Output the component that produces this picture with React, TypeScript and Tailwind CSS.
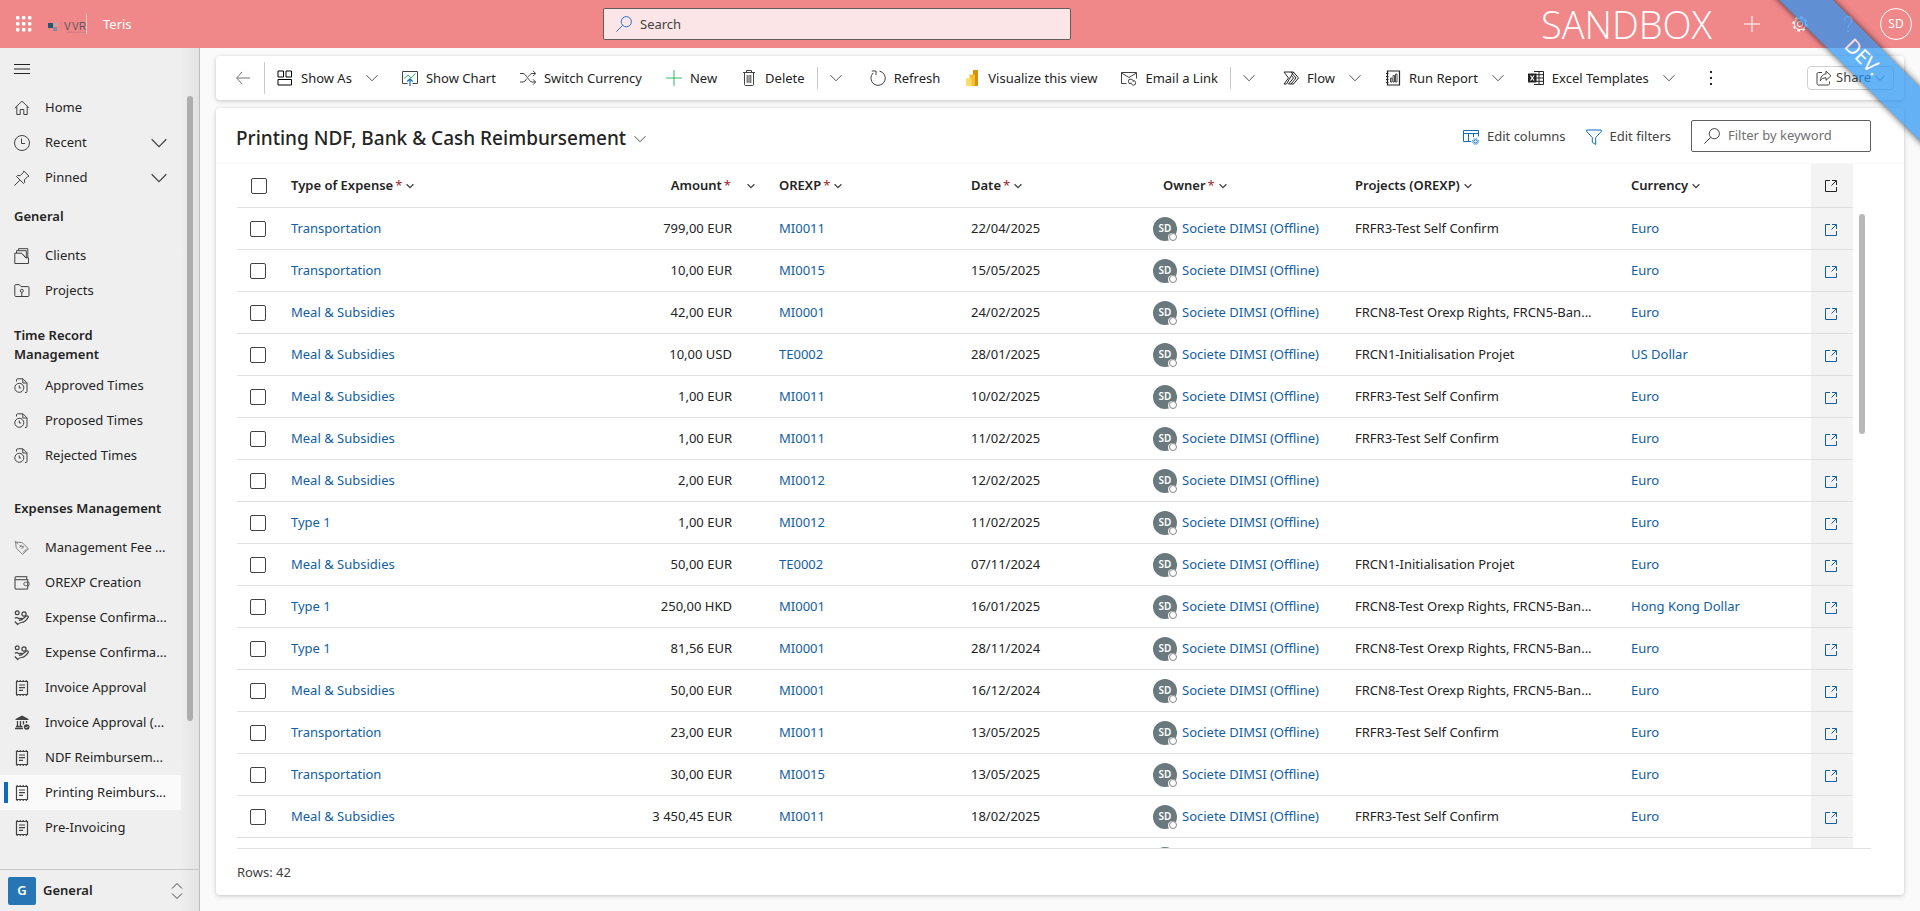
import type { ReactNode, SVGProps } from 'react';
import { clsx } from 'clsx';

type IconProps = SVGProps<SVGSVGElement>;

const Icon = ({ children, className = 'size-4', ...rest }: IconProps) => (
  <svg viewBox="0 0 16 16" fill="none" stroke="currentColor" strokeWidth="1" className={clsx('shrink-0', className)} aria-hidden="true" {...rest}>
    {children}
  </svg>
);

const ChevronDown = ({ className = 'size-3 text-[#424242]' }: { className?: string }) => (
  <svg viewBox="0 0 12 12" fill="none" stroke="currentColor" strokeWidth=".9" className={clsx('shrink-0', className)} aria-hidden="true">
    <path d="M.5 3.2 6 8.8l5.5-5.6" />
  </svg>
);

const SortChevron = () => (
  <svg viewBox="0 0 8 8" fill="none" stroke="currentColor" strokeWidth="1.3" className="size-2 shrink-0 text-[#424242]" aria-hidden="true">
    <path d="M.6 2.2 4 5.6l3.4-3.4" />
  </svg>
);

const SearchIcon = ({ className }: { className?: string }) => (
  <Icon className={className}>
    <circle cx="10.3" cy="5.7" r="5.1" />
    <path d="M6.7 9.3.4 15.6" />
  </Icon>
);

const HomeIcon = () => (
  <Icon>
    <path d="M.8 8 8 1.2 15.2 8M2.8 6.2v8.3h3.4V9.5h3.6v5h3.4V6.2" />
  </Icon>
);

const ClockIcon = () => (
  <Icon>
    <circle cx="8" cy="8" r="7.5" />
    <path d="M7.5 3.5v5h3.5" />
  </Icon>
);

const PinIcon = () => (
  <Icon>
    <path d="M.5 15.5 5.700 10.300M9.800 1 15 6.200l-1.400.5-3.200 3.200.2 2.600-1 1L2.500 6.500l1-1 2.700.2L9.300 2.500z" />
  </Icon>
);

const ClientsIcon = () => (
  <Icon>
    <path d="M.8 5.200v10.300h13.700V9.800H12L7.300 5.200zM2.500 5V2.700h9.800v7M4.500 2.500V.7h9.300v9M7.300 5.200l5 4.800" />
  </Icon>
);

const ProjectsIcon = () => (
  <Icon>
    <path d="M.8 12.500V2.600c0-.6.4-1 1-1h3.500l1.700 2h7c.6 0 1 .4 1 1v7.900c0 .6-.4 1-1 1H1.800c-.6 0-1-.4-1-1z" />
    <circle cx="7.800" cy="7.800" r="1.500" />
    <path d="M7.800 9.300v4" />
  </Icon>
);

const TimesIcon = () => (
  <Icon>
    <circle cx="5.300" cy="9.800" r="4.500" />
    <path d="M5.300 7.500v2.500h1.800M2.500 3.500V1.800c0-.6.4-1 1-1h5.500l4 4v8.700c0 .6-.4 1-1 1h-1M8.800 1v4h4" />
  </Icon>
);

const TagIcon = () => (
  <Icon className="size-4 text-[#808080]">
    <path d="m1.500 2 .8 6.200 6.300 6.200 5.900-5.600-6.300-6.200L1.500 2zM.5.8l3.500 3.500" />
    <path d="m5.500 7.500 2-2.300M7.500 9l2-2.500M5.500 5.500l4.500 1.500M9 12.500l4-4" />
  </Icon>
);

const WalletIcon = () => (
  <Icon className="size-4 text-[#616161]">
    <path d="M1 3.200v9.600c0 .8.600 1.400 1.400 1.400h10.400c.5 0 .9-.4.900-.9V4.700H2.300C1.500 4.700 1 4 1 3.200s.6-1.600 1.400-1.600h10.300v3" strokeWidth="1.300" />
    <path d="M15 7.200h-3.500a1.700 1.700 0 0 0 0 3.500H15z" />
  </Icon>
);

const HandIcon = () => (
  <Icon strokeWidth="1.200">
    <circle cx="3.200" cy="2.800" r="1.900" />
    <circle cx="10" cy="4" r="2.100" />
    <path d="M.8 8.200c1.500-1 3-.6 4 .5l2.500-.3c1 0 1 1.500 0 1.600l-2.300.4M8 9.500l4-3.300c1-.8 2.800 0 2.200 1.200-1.500 2.400-3.500 4.800-6.500 5.100-1.500.1-3 .3-4 2L.8 11.500" />
  </Icon>
);

const ReceiptIcon = () => (
  <Icon>
    <path d="M2.500 1.500h11v13h-11z" strokeWidth="1.200" />
    <path d="M2.500.7h11M2.500 15.300h11" strokeDasharray="1.500 1.500" />
    <path d="M5 5h6M5 7.700h6M5 10.300h4" strokeWidth="1.200" />
  </Icon>
);

const BankIcon = () => (
  <Icon>
    <path d="M8 .5 14.500 4v1h-13V4z" fill="currentColor" stroke="none" />
    <path d="M3.500 6v5M6.500 6v5M9.500 6v3.500M12.500 6v2M1 13.500h8M2 11.500h6.500" strokeWidth="1.300" />
    <circle cx="12.700" cy="12" r="2.800" fill="currentColor" stroke="none" />
    <path d="m11.400 12 1 1 1.700-1.700" stroke="#efefef" />
  </Icon>
);

const ShowAsIcon = () => (
  <Icon className="size-4 text-black">
    <path d="M1 1h5.500v6H1zM9 1h5.500v6H9zM1 9.500h13.500V15H1z" />
  </Icon>
);

const ChartIcon = () => (
  <Icon>
    <path d="M5.500 13.500h-5v-12h15v12h-5" />
    <path d="M2 8.500 6 5l3 3 4.500-4.500" stroke="#2fb866" />
    <path d="M8 16V9M5.300 11.500 8 8.800l2.700 2.700" stroke="#0f6cbd" strokeWidth="1.200" />
  </Icon>
);

const SwitchIcon = () => (
  <Icon>
    <path d="M0 3.500h3c3 0 6 8.500 9 8.500h3.500M0 12h3c1.300 0 2.500-1.500 3.700-3.300M8.300 6.700C9.500 5 10.700 3.500 12 3.500h3.500M13 .8l2.700 2.700L13 6.200M13 9.300l2.700 2.700-2.700 2.700" />
  </Icon>
);

const PlusIcon = ({ className }: { className?: string }) => (
  <Icon className={className}>
    <path d="M8 0v16M0 8h16" />
  </Icon>
);

const TrashIcon = () => (
  <Icon>
    <path d="M2 2.500h12M5.500 2.500v-2h5v2M3.500 2.500v12c0 .6.400 1 1 1h7c.6 0 1-.4 1-1v-12M6.200 5v8M8 5v8M9.800 5v8" />
  </Icon>
);

const RefreshIcon = () => (
  <Icon>
    <path d="M9.500 1.100a7.200 7.200 0 1 1-6.300 1.800M1.800 1H6v4" />
  </Icon>
);

const PowerBiIcon = () => (
  <Icon stroke="none">
    <path d="M9 0h4.500c.3 0 .5.200.5.500v15c0 .3-.2.500-.5.500H9z" fill="#d9910a" />
    <path d="M5.500 4.500h4.800c.4 0 .7.300.7.700V16H5.500z" fill="#f0c02f" />
    <path d="M2.500 8.300h4.300c.4 0 .7.300.7.700v7h-5c-.3 0-.5-.2-.5-.5V8.800c0-.3.200-.5.500-.5z" fill="#f8dc6a" />
  </Icon>
);

const MailLinkIcon = () => (
  <Icon>
    <path d="M5.500 13.500h-5v-11h15v6M.5 3 8 7.500 15.500 3" />
    <path d="M10 13.500a2.200 2.200 0 1 1 0-4.300c1.500 0 2.300 1.200 2 2.500M12 10.700a2.200 2.200 0 1 1 .8 4.500c-1.500 0-2.700-1-2.500-2.500" />
  </Icon>
);

const FlowIcon = () => (
  <Icon className="size-4 text-[#242424]">
    <path d="M1 2h9.500l5 6-5 6H8l5-6-5-6M1 2l4.500 6L1 14h2.500l7-12M5.500 14 10.500 8 8.500 5.500M5.500 14H8" />
  </Icon>
);

const ReportIcon = () => (
  <Icon className="size-4 text-[#242424]">
    <path d="M2.500 1h12v14h-12zM1 3.500h2.500M1 6.500h2.500M1 9.500h2.500M1 12.500h2.500" strokeWidth="1.200" />
    <path d="M5.500 8h1.500v4H5.500zM8 5.500h1.500v6.500H8zM10.500 4H12v8h-1.500z" strokeWidth=".8" />
  </Icon>
);

const ExcelIcon = () => (
  <Icon className="size-4 text-[#242424]">
    <path d="M6 1.500h9.500v13H6M6 4.700h9.500M6 8h9.500M6 11.300h9.500M11 1.500v13" />
    <path d="M0 3.500h8.500v9H0z" fill="currentColor" stroke="none" />
    <path d="m2.500 5.500 3.500 5M6 5.500l-3.500 5" stroke="#fff" strokeWidth="1.200" />
  </Icon>
);

const ShareIcon = () => (
  <Icon>
    <path d="M6 2.500H2.500c-1 0-1.500.5-1.500 1.500v9.500c0 1 .5 1.500 1.500 1.500H12c1 0 1.500-.5 1.500-1.500v-2M10 1.200 15 5.800l-5 4.500V7.800c-2.800 0-4.500.9-5.700 3C4.500 7 6.500 4.200 10 3.900z" />
  </Icon>
);

const GearIcon = () => (
  <Icon>
    <circle cx="8" cy="8" r="2.600" />
    <circle cx="8" cy="8" r="5.600" />
    <circle cx="8" cy="8" r="6.900" strokeWidth="1.600" strokeDasharray="2.700 2.720" />
  </Icon>
);

const HelpIcon = () => (
  <Icon>
    <path d="M4.500 4.500C4.500 2 6 .6 8.200.6s3.800 1.400 3.800 3.600c0 3-4 3.800-4 7.300M8 14v1.800" />
  </Icon>
);

const EditColumnsIcon = () => (
  <Icon className="size-4 text-[#0f6cbd]">
    <path d="M8 12.500H.5v-11h15v6M.5 4.500h15M5.500 4.500v8M10.500 4.500V8" />
    <circle cx="12.500" cy="12.500" r="1.700" />
    <circle cx="12.500" cy="12.500" r="2.900" strokeDasharray="1.100 1.177" />
  </Icon>
);

const FunnelIcon = () => (
  <Icon className="size-4 text-[#0f6cbd]">
    <path d="M.7 1h14.600v1.500L9.700 8.500v7l-3.400-2.200V8.500L.7 2.500z" />
  </Icon>
);

const OpenIcon = () => (
  <svg viewBox="0 0 12 12" fill="none" stroke="currentColor" className="size-3 shrink-0" aria-hidden="true">
    <path d="M5 .5H.5v11h11V7M7 .5h4.500V5M11 1 6.500 5.500" />
  </svg>
);

interface NavItem {
  label: string;
  icon: ReactNode;
  active?: boolean;
}

const times: NavItem[] = [
  { label: 'Approved Times', icon: <TimesIcon /> },
  { label: 'Proposed Times', icon: <TimesIcon /> },
  { label: 'Rejected Times', icon: <TimesIcon /> },
];

const expenses: NavItem[] = [
  { label: 'Management Fee ...', icon: <TagIcon /> },
  { label: 'OREXP Creation', icon: <WalletIcon /> },
  { label: 'Expense Confirma...', icon: <HandIcon /> },
  { label: 'Expense Confirma...', icon: <HandIcon /> },
  { label: 'Invoice Approval', icon: <ReceiptIcon /> },
  { label: 'Invoice Approval (...', icon: <BankIcon /> },
  { label: 'NDF Reimbursem...', icon: <ReceiptIcon /> },
  { label: 'Printing Reimburs...', icon: <ReceiptIcon />, active: true },
  { label: 'Pre-Invoicing', icon: <ReceiptIcon /> },
];

const NavLink = ({ label, icon, active }: NavItem) => (
  <li className={clsx('flex h-[35px] items-center pl-1', active && 'bg-[#fafafa]')}>
    <span className={clsx('h-[21px] w-1 shrink-0', active && 'bg-[#0f6cbd]')} />
    <a href="#" className="flex min-w-0 grow items-center gap-[15px] pl-1.5 whitespace-nowrap">
      <span className="text-[#424242]">{icon}</span>
      {label}
    </a>
  </li>
);

const NavToggle = ({ label, icon }: NavItem) => (
  <li>
    <button className="flex h-[35px] w-full items-center gap-[15px] pr-[14px] pl-3.5 text-left">
      <span className="text-[#424242]">{icon}</span>
      <span className="grow">{label}</span>
      <ChevronDown className="size-4 text-[#424242]" />
    </button>
  </li>
);

const NavHeading = ({ children }: { children: ReactNode }) => (
  <h2 className="px-3.5 leading-[19px] font-semibold">{children}</h2>
);

interface Expense {
  type: string;
  amount: string;
  orexp: string;
  date: string;
  projects?: string;
  currency: string;
}

const orexpRights = 'FRCN8-Test Orexp Rights, FRCN5-Ban...';

const rows: Expense[] = [
  { type: 'Transportation', amount: '799,00 EUR', orexp: 'MI0011', date: '22/04/2025', projects: 'FRFR3-Test Self Confirm', currency: 'Euro' },
  { type: 'Transportation', amount: '10,00 EUR', orexp: 'MI0015', date: '15/05/2025', currency: 'Euro' },
  { type: 'Meal & Subsidies', amount: '42,00 EUR', orexp: 'MI0001', date: '24/02/2025', projects: orexpRights, currency: 'Euro' },
  { type: 'Meal & Subsidies', amount: '10,00 USD', orexp: 'TE0002', date: '28/01/2025', projects: 'FRCN1-Initialisation Projet', currency: 'US Dollar' },
  { type: 'Meal & Subsidies', amount: '1,00 EUR', orexp: 'MI0011', date: '10/02/2025', projects: 'FRFR3-Test Self Confirm', currency: 'Euro' },
  { type: 'Meal & Subsidies', amount: '1,00 EUR', orexp: 'MI0011', date: '11/02/2025', projects: 'FRFR3-Test Self Confirm', currency: 'Euro' },
  { type: 'Meal & Subsidies', amount: '2,00 EUR', orexp: 'MI0012', date: '12/02/2025', currency: 'Euro' },
  { type: 'Type 1', amount: '1,00 EUR', orexp: 'MI0012', date: '11/02/2025', currency: 'Euro' },
  { type: 'Meal & Subsidies', amount: '50,00 EUR', orexp: 'TE0002', date: '07/11/2024', projects: 'FRCN1-Initialisation Projet', currency: 'Euro' },
  { type: 'Type 1', amount: '250,00 HKD', orexp: 'MI0001', date: '16/01/2025', projects: orexpRights, currency: 'Hong Kong Dollar' },
  { type: 'Type 1', amount: '81,56 EUR', orexp: 'MI0001', date: '28/11/2024', projects: orexpRights, currency: 'Euro' },
  { type: 'Meal & Subsidies', amount: '50,00 EUR', orexp: 'MI0001', date: '16/12/2024', projects: orexpRights, currency: 'Euro' },
  { type: 'Transportation', amount: '23,00 EUR', orexp: 'MI0011', date: '13/05/2025', projects: 'FRFR3-Test Self Confirm', currency: 'Euro' },
  { type: 'Transportation', amount: '30,00 EUR', orexp: 'MI0015', date: '13/05/2025', currency: 'Euro' },
  { type: 'Meal & Subsidies', amount: '3 450,45 EUR', orexp: 'MI0011', date: '18/02/2025', projects: 'FRFR3-Test Self Confirm', currency: 'Euro' },
];

const Command = ({ icon, label, menu }: { icon: ReactNode; label: string; menu?: boolean }) => (
  <button className="flex h-9 shrink-0 items-center gap-2 px-3 whitespace-nowrap">
    <span className="text-[#424242]">{icon}</span>
    <span className="pt-0.5">{label}</span>
    {menu && <ChevronDown className="ml-1.5 size-3 text-[#424242]" />}
  </button>
);

const SplitMenu = ({ label }: { label: string }) => (
  <button aria-label={label} className="flex h-[22px] shrink-0 items-center border-l border-[#c8c8c8] pr-4 pl-3">
    <ChevronDown />
  </button>
);

const ColumnTitle = ({ label, required }: { label: string; required?: boolean }) => (
  <button className="flex items-center gap-1 font-semibold">
    <span>
      {label}
      {required && <span className="ml-0.5 font-normal text-[#a4262c]">*</span>}
    </span>
    <SortChevron />
  </button>
);

const Checkbox = ({ label }: { label: string }) => (
  <input
    type="checkbox"
    aria-label={label}
    className="block size-4 appearance-none rounded-xs border border-[#424242] bg-white"
  />
);

const Owner = () => (
  <a href="#" className="flex items-center gap-[5px]">
    <span className="relative flex size-6 shrink-0 items-center justify-center rounded-full bg-[#69797e] text-[10px] font-semibold text-white">
      SD
      <span className="absolute right-0 -bottom-px flex size-[9px] items-center justify-center rounded-full bg-white">
        <span className="size-2 rounded-full border border-[#8a8886]" />
      </span>
    </span>
    <span className="whitespace-nowrap">Societe DIMSI (Offline)</span>
  </a>
);

const cell = 'border-b border-[#e0e0e0] px-3';

const TopBar = () => (
  <header className="flex h-12 shrink-0 items-center bg-[#f08789] text-white">
    <div className="flex w-[603px] items-center">
      <button aria-label="App launcher" className="ml-4">
        <svg viewBox="0 0 16 16" fill="currentColor" className="size-4">
          {[0, 6, 12].map((y) => [0, 6, 12].map((x) => <rect key={`${x}-${y}`} x={x} y={y} width="3.4" height="3.4" rx="1" />))}
        </svg>
      </button>
      <a href="#" aria-label="VVR" className="ml-4 flex h-5 items-center border-r border-white/50">
        <svg viewBox="0 0 38 20" className="h-5 w-[38px]">
          <path d="M0 9h5v5H0z" fill="#1d5a73" />
          <path d="M6 8h4v4H6z" fill="#c9a0a2" />
          <path d="M5 13h4v4H5z" fill="#7d8f9c" />
          <path d="M13.500 7v10" stroke="#d98085" strokeWidth=".6" />
          <text x="16" y="16" fontSize="10" fontFamily="Liberation Sans" fill="#5a5560">V</text>
          <text x="24" y="16" fontSize="10" fontFamily="Liberation Sans" fill="#5a5560">V</text>
          <text x="31" y="16" fontSize="10" fontFamily="Liberation Sans" fill="#5a5560">R</text>
          <path d="M18 18.200h20" stroke="#c97a80" strokeWidth=".8" />
        </svg>
      </a>
      <span className="ml-4 pt-0.5">Teris</span>
    </div>
    <label className="flex h-8 w-[468px] items-center gap-2 rounded-xs border border-[#605e5c] bg-[#fce5e6] pl-3 text-[#424242]">
      <SearchIcon className="size-4 text-[#2b71c4]" />
      <input type="search" placeholder="Search" aria-label="Search" className="grow pt-0.5 outline-none placeholder:text-[#424242]" />
    </label>
    <div className="flex flex-1 items-center justify-end pr-2">
      <span className="font-['Open_Sans',sans-serif] text-[38px] leading-12 font-light">SANDBOX</span>
      <button aria-label="New" className="ml-8"><PlusIcon /></button>
      <button aria-label="Settings" className="ml-8"><GearIcon /></button>
      <button aria-label="Help" className="ml-8"><HelpIcon /></button>
      <button aria-label="Account" className="ml-6 size-8 rounded-full border border-white text-xs">SD</button>
    </div>
  </header>
);

const Sidebar = () => (
  <aside className="flex w-[200px] shrink-0 flex-col border-r border-[#bdbdbd] bg-[linear-gradient(to_right,#efefef_180px,#e2e2e2)]">
    <div className="flex min-h-0 grow">
      <nav className="w-[181px] shrink-0">
        <button aria-label="Collapse site map" className="flex h-[42px] items-center pl-3.5">
          <Icon><path d="M0 3.500h16M0 8h16M0 12.500h16" /></Icon>
        </button>
        <ul>
          <NavLink label="Home" icon={<HomeIcon />} />
          <NavToggle label="Recent" icon={<ClockIcon />} />
          <NavToggle label="Pinned" icon={<PinIcon />} />
        </ul>
        <div className="py-3"><NavHeading>General</NavHeading></div>
        <ul>
          <NavLink label="Clients" icon={<ClientsIcon />} />
          <NavLink label="Projects" icon={<ProjectsIcon />} />
        </ul>
        <div className="pt-[18px] pb-1"><NavHeading>Time Record Management</NavHeading></div>
        <ul>{times.map((item) => <NavLink key={item.label} {...item} />)}</ul>
        <div className="pt-[26px] pb-3"><NavHeading>Expenses Management</NavHeading></div>
        <ul>{expenses.map((item, i) => <NavLink key={i} {...item} />)}</ul>
      </nav>
      <div className="mt-12 ml-1.5 h-[625px] w-1.5 rounded-full bg-[#adadad]" />
    </div>
    <button className="flex h-[42px] shrink-0 items-center border-t border-[#c8c8c8] pr-3.5 pl-2 text-left">
      <span className="flex size-7 items-center justify-center rounded-xs bg-[#2775b4] font-semibold text-white">G</span>
      <span className="ml-[7px] grow font-semibold">General</span>
      <Icon className="size-4 text-[#424242]"><path d="m3 5.500 5-5 5 5M3 10.500l5 5 5-5" /></Icon>
    </button>
  </aside>
);

const CommandBar = () => (
  <div className="flex h-11 shrink-0 items-center rounded bg-white pr-2.5 pl-5 shadow-[0_1px_4px_rgba(0,0,0,0.22)]">
    <button aria-label="Back" className="mr-3.5 text-[#616161]">
      <Icon className="size-[14px]"><path d="M7 1 .8 8 7 15M.8 8H16" /></Icon>
    </button>
    <span className="h-8 w-px bg-[#c8c8c8]" />
    <Command icon={<ShowAsIcon />} label="Show As" menu />
    <Command icon={<ChartIcon />} label="Show Chart" />
    <Command icon={<SwitchIcon />} label="Switch Currency" />
    <Command icon={<PlusIcon className="size-4 text-[#2fb866]" />} label="New" />
    <Command icon={<TrashIcon />} label="Delete" />
    <SplitMenu label="More delete options" />
    <Command icon={<RefreshIcon />} label="Refresh" />
    <Command icon={<PowerBiIcon />} label="Visualize this view" />
    <Command icon={<MailLinkIcon />} label="Email a Link" />
    <SplitMenu label="More email options" />
    <Command icon={<FlowIcon />} label="Flow" menu />
    <Command icon={<ReportIcon />} label="Run Report" menu />
    <Command icon={<ExcelIcon />} label="Excel Templates" menu />
    <button aria-label="More commands" className="ml-4">
      <Icon fill="currentColor" stroke="none"><path d="M7 1h2v2H7zM7 7h2v2H7zM7 13h2v2H7z" /></Icon>
    </button>
    <button className="ml-auto flex h-6 items-center gap-1 rounded border border-[#d1d1d1] px-2 text-[#424242]">
      <ShareIcon />
      Share
      <ChevronDown className="size-2.5" />
    </button>
  </div>
);

const Grid = () => (
  <section className="flex min-h-0 grow flex-col rounded bg-white shadow-[0_1px_4px_rgba(0,0,0,0.22)]">
    <div className="flex h-14 shrink-0 items-center border-b border-[#f7f7f7] pr-[33px] pl-5">
      <button className="flex items-center gap-2 pt-1.5">
        <h1 className="text-[19px] font-medium">Printing NDF, Bank &amp; Cash Reimbursement</h1>
        <ChevronDown />
      </button>
      <div className="ml-auto flex items-center text-[#424242]">
        <button className="flex items-center gap-2 pt-0.5"><EditColumnsIcon />Edit columns</button>
        <button className="ml-5 flex items-center gap-2 pt-0.5"><FunnelIcon />Edit filters</button>
        <label className="ml-5 flex h-8 w-[180px] items-center gap-2 rounded-xs border border-[#605e5c] pl-3">
          <SearchIcon className="size-4 text-[#424242]" />
          <input type="search" placeholder="Filter by keyword" aria-label="Filter by keyword" className="w-full min-w-0 outline-none placeholder:text-[#707070]" />
        </label>
      </div>
    </div>
    <div className="mr-[33px] ml-[21px] flex min-h-0 grow basis-0 overflow-hidden">
      <table className="w-full table-fixed border-separate border-spacing-0 self-start">
        <colgroup>
          <col className="w-[42px]" />
          <col />
          <col className="w-48" />
          <col className="w-48" />
          <col className="w-48" />
          <col className="w-48" />
          <col className="w-[276px]" />
          <col className="w-48" />
          <col className="w-[42px]" />
        </colgroup>
        <thead>
          <tr className="h-11 text-left">
            <th className="border-b border-[#e0e0e0] pl-3.5"><Checkbox label="Select all rows" /></th>
            <th className={cell}><ColumnTitle label="Type of Expense" required /></th>
            <th className={cell}>
              <button className="ml-auto flex items-center gap-4 font-semibold">
                <span>Amount<span className="ml-0.5 font-normal text-[#a4262c]">*</span></span>
                <SortChevron />
              </button>
            </th>
            <th className={cell}><ColumnTitle label="OREXP" required /></th>
            <th className={cell}><ColumnTitle label="Date" required /></th>
            <th className={cell}><ColumnTitle label="Owner" required /></th>
            <th className={cell}><ColumnTitle label="Projects (OREXP)" /></th>
            <th className={cell}><ColumnTitle label="Currency" /></th>
            <th className="border-b border-[#e0e0e0] bg-[#f3f3f3] px-3.5"><OpenIcon /></th>
          </tr>
        </thead>
        <tbody className="text-[#115ea3]">
          {rows.map((row, i) => (
            <tr key={i} className="h-[42px]">
              <td className="border-b border-[#e0e0e0] pl-[13px]"><Checkbox label={`Select row ${i + 1}`} /></td>
              <td className={cell}><a href="#">{row.type}</a></td>
              <td className="border-b border-[#e0e0e0] pr-[35px] text-right text-[#242424]">{row.amount}</td>
              <td className={cell}><a href="#">{row.orexp}</a></td>
              <td className={clsx(cell, 'text-[#242424]')}>{row.date}</td>
              <td className="border-b border-[#e0e0e0] pl-0.5"><Owner /></td>
              <td className={clsx(cell, 'whitespace-nowrap text-[#242424]')}>{row.projects}</td>
              <td className={cell}><a href="#">{row.currency}</a></td>
              <td className="border-b border-[#e0e0e0] bg-[#f3f3f3] px-3.5"><a href="#" aria-label="Open record" className="block pt-0.5"><OpenIcon /></a></td>
            </tr>
          ))}
          <tr className="h-[42px]">
            <td colSpan={5} />
            <td className="pl-0.5"><Owner /></td>
            <td colSpan={2} />
            <td className="bg-[#f3f3f3]" />
          </tr>
        </tbody>
      </table>
      <div className="mt-[50px] mr-1.5 ml-1.5 h-[220px] w-1.5 shrink-0 rounded-full bg-[#b8b8b8]" />
    </div>
    <footer className="mr-[33px] ml-[21px] flex h-[47px] shrink-0 items-center border-t border-[#e0e0e0] pt-0.5 text-[#424242]">Rows: 42</footer>
  </section>
);

const EnvRibbon = () => (
  <div className="pointer-events-none absolute top-0 right-0 size-[150px] overflow-hidden">
    <div className="absolute top-[38px] -right-[53px] flex h-[38px] w-[220px] rotate-45 items-center justify-center bg-[#2593f5] text-xl text-white opacity-70 shadow-[0_0_6px_#000]">
      DEV.
    </div>
  </div>
);

export default function App() {
  return (
    <div className="relative flex h-screen flex-col overflow-hidden bg-[#fafafa] font-['Noto_Sans','Open_Sans',sans-serif] text-[13px] text-[#242424]">
      <TopBar />
      <div className="flex min-h-0 grow">
        <Sidebar />
        <main className="flex min-w-0 grow flex-col gap-2 pt-2 pr-4 pb-4 pl-4">
          <CommandBar />
          <Grid />
        </main>
      </div>
      <EnvRibbon />
    </div>
  );
}
